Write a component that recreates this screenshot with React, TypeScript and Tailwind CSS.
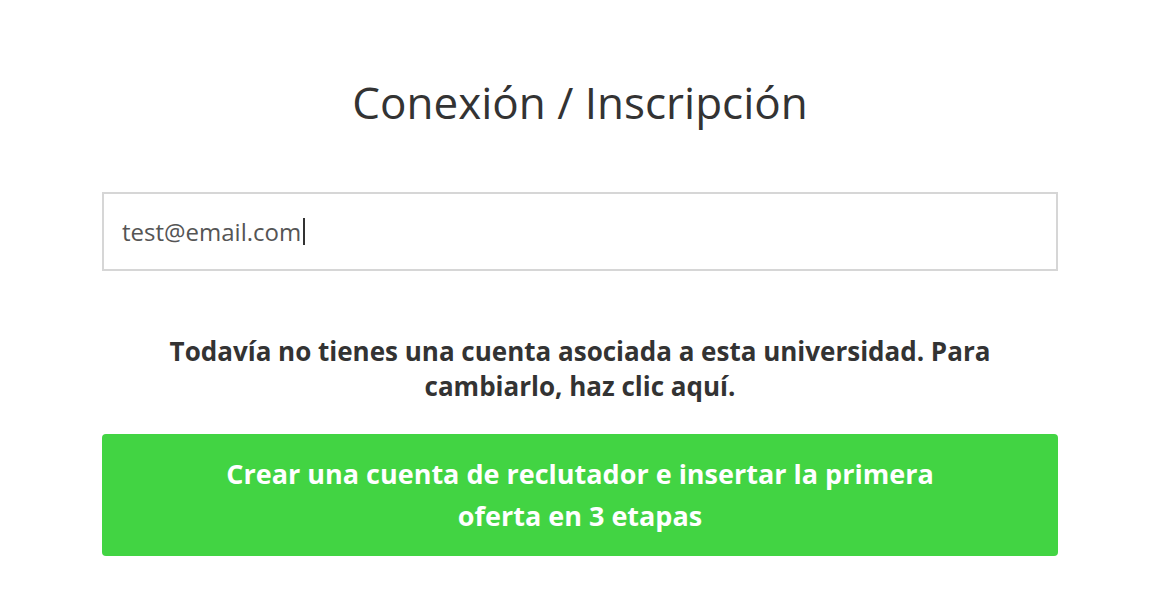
export default function App() {
  return (
    <div className="min-h-screen bg-white font-['Open_Sans',sans-serif] text-[#333]">
      <div className="mx-auto w-[956px] pt-[74px]">
        <h1 className="text-center text-[44px] leading-[56px] font-normal text-[#333]">
          Conexión / Inscripción
        </h1>

        <div className="mt-[62px] flex h-[79px] items-center border-2 border-[#d6d6d6] px-[18px]">
          <span className="text-[24px] text-[#555]">test@email.com</span>
          <span className="ml-[2px] h-[27px] w-[2px] bg-[#333]" />
        </div>

        <p className="mt-[63px] px-[40px] text-center text-[26px] leading-[35px] font-bold text-[#333]">
          Todavía no tienes una cuenta asociada a esta universidad. Para cambiarlo, haz clic aquí.
        </p>

        <button className="mt-[30px] w-full rounded-[4px] bg-[#42d443] px-[110px] py-[19px] text-center text-[27px] leading-[42px] font-bold text-white">
          Crear una cuenta de reclutador e insertar la primera oferta en 3 etapas
        </button>
      </div>
    </div>
  );
}
